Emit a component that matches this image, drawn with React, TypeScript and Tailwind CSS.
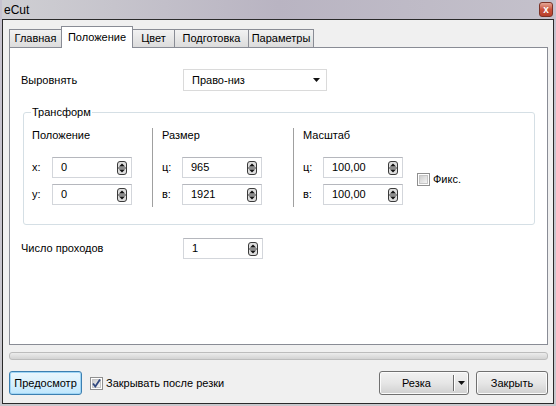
import React from "react";

function SpinIcon() {
  return (
    <svg width="10" height="14" viewBox="0 0 10 14" className="shrink-0">
      <rect x="0.5" y="0.5" width="9" height="13" rx="2.5" fill="#dedede" stroke="#3a3a3a" />
      <line x1="1" y1="7" x2="9" y2="7" stroke="#3a3a3a" />
      <path d="M2 5.6 L8 5.6 L5 2.4 Z" fill="#111" />
      <path d="M2 8.4 L8 8.4 L5 11.6 Z" fill="#111" />
    </svg>
  );
}

function SpinBox({ value }: { value: string }) {
  return (
    <div className="flex h-[21px] w-[80px] items-center justify-between border border-[#d3d6db] border-t-[#b5b7bd] bg-white pl-[8px] pr-[4px]">
      <span>{value}</span>
      <SpinIcon />
    </div>
  );
}

function Field({ label, value }: { label: string; value: string }) {
  return (
    <div className="flex items-center">
      <span className="w-[20px]">{label}</span>
      <SpinBox value={value} />
    </div>
  );
}

function Column({
  title,
  rows,
  className,
}: {
  title: string;
  rows: [string, string][];
  className: string;
}) {
  return (
    <div className={className}>
      <div className="h-[14px] leading-[14px]">{title}</div>
      <div className="mt-[15px] flex flex-col gap-[6px] pb-[2px]">
        {rows.map(([l, v]) => (
          <Field key={l} label={l} value={v} />
        ))}
      </div>
    </div>
  );
}

function CheckBox({ checked }: { checked?: boolean }) {
  return (
    <div className="flex h-[13px] w-[13px] shrink-0 items-center justify-center border border-[#8f8f8f] bg-white">
      <div className="relative h-[9px] w-[9px] border border-[#c6c6c6] bg-gradient-to-br from-[#cfcfcf] to-[#f4f4f4]">
        {checked && (
          <svg width="11" height="11" viewBox="0 0 11 11" className="absolute -left-[2px] -top-[2px]">
            <path d="M2 5.5 L4.3 8.5 L9 1.5" fill="none" stroke="#31487f" strokeWidth="1.8" />
          </svg>
        )}
      </div>
    </div>
  );
}

const tabs = [
  { name: "Главная", w: "w-[53px]" },
  { name: "Положение", w: "w-[72px]", active: true },
  { name: "Цвет", w: "w-[43px]" },
  { name: "Подготовка", w: "w-[75px]" },
  { name: "Параметры", w: "w-[66px]" },
];

export default function App() {
  return (
    <div className="flex h-[406px] w-[556px] flex-col bg-gradient-to-b from-[#c6c2cf] to-[#c9c8cd] px-[2px] pb-[2px] font-['Liberation_Sans',Tahoma,Arial,sans-serif] text-[11px] text-black">
      {/* Title bar */}
      <div className="flex h-[19px] shrink-0 items-center justify-between bg-gradient-to-r from-[#cfcfd3] via-[#b9b4c2] to-[#c4c1cb] pl-[2px] pr-[1px]">
        <span className="text-[12px]">eCut</span>
        <div className="flex h-[15px] w-[14px] items-center justify-center rounded-[3px] border border-[#7c3327] bg-gradient-to-b from-[#e4a696] via-[#c9523c] to-[#b8402c] text-[10px] font-bold leading-none text-white">
          x
        </div>
      </div>

      {/* Client */}
      <div className="flex flex-1 flex-col border border-[#2a2a2a] bg-[#f0f0f0] pl-[6px] pr-[5px]">
        {/* Tabs */}
        <div className="mt-[6px] flex h-[21px] items-end pl-[1px]">
          {tabs.map((t) =>
            t.active ? (
              <div
                key={t.name}
                className={`relative z-10 -mb-px -ml-px flex h-[22px] ${t.w} items-start justify-center border border-b-0 border-[#898c95] bg-white pt-[2px]`}
              >
                {t.name}
              </div>
            ) : (
              <div
                key={t.name}
                className={`-ml-px flex h-[18px] ${t.w} items-center justify-center border border-b-0 border-[#898c95] bg-gradient-to-b from-[#f2f2f2] to-[#dcdcdc]`}
              >
                {t.name}
              </div>
            )
          )}
        </div>

        {/* Panel */}
        <div className="flex h-[298px] flex-col border border-[#898c95] bg-white pl-[11px] pr-[12px] pt-[21px]">
          <div className="flex items-center">
            <span className="w-[162px]">Выровнять</span>
            <div className="flex h-[22px] w-[144px] items-center justify-between border border-[#dadada] bg-white pl-[8px] pr-[6px]">
              <span>Право-низ</span>
              <svg width="7" height="4" viewBox="0 0 7 4">
                <path d="M0 0 L7 0 L3.5 4 Z" fill="#111" />
              </svg>
            </div>
          </div>

          <fieldset className="ml-[2px] mt-[14px] rounded-[3px] border border-[#d5dfe5] px-0 pb-[17px] pt-[9px]">
            <legend className="ml-[7px] px-[1px] leading-[14px]">Трансформ</legend>
            <div className="flex items-stretch">
              <Column
                title="Положение"
                rows={[
                  ["x:", "0"],
                  ["y:", "0"],
                ]}
                className="w-[128px] pl-[8px]"
              />
              <Column
                title="Размер"
                rows={[
                  ["ц:", "965"],
                  ["в:", "1921"],
                ]}
                className="w-[141px] border-l border-[#a0a0a0] pl-[9px]"
              />
              <div className="flex items-center border-l border-[#a0a0a0] pl-[9px]">
                <Column
                  title="Масштаб"
                  rows={[
                    ["ц:", "100,00"],
                    ["в:", "100,00"],
                  ]}
                  className=""
                />
                <div className="ml-[14px] mt-[24px] flex items-center gap-[3px]">
                  <CheckBox />
                  <span>Фикс.</span>
                </div>
              </div>
            </div>
          </fieldset>

          <div className="mt-[13px] flex items-center">
            <span className="w-[162px]">Число проходов</span>
            <SpinBox value="1" />
          </div>
        </div>

        {/* Progress bar */}
        <div className="mt-[7px] h-[8px] rounded-[3px] border border-[#bcbcbc] bg-gradient-to-b from-[#ececec] to-[#d3d3d3]" />

        {/* Bottom buttons */}
        <div className="mt-[11px] flex items-center">
          <div className="flex h-[24px] w-[73px] items-center justify-center rounded-[3px] border border-[#3c7fb1] bg-gradient-to-b from-[#eaf6fd] via-[#d9f0fc] to-[#bee6fd] shadow-[inset_0_0_0_1px_#9fd5f5]">
            Предосмотр
          </div>
          <div className="ml-[8px] flex items-center gap-[3px]">
            <CheckBox checked />
            <span>Закрывать после резки</span>
          </div>
          <div className="ml-auto flex h-[24px] w-[90px] items-center rounded-[3px] border border-[#707070] bg-gradient-to-b from-[#f2f2f2] via-[#e6e6e6] to-[#d0d0d0] shadow-[inset_0_0_0_1px_#fbfbfb]">
            <span className="flex-1 text-center">Резка</span>
            <div className="h-[16px] w-[2px] border-l border-r border-l-[#6a6a6a] border-r-[#ffffff]" />
            <div className="flex w-[13px] justify-center">
              <svg width="7" height="4" viewBox="0 0 7 4">
                <path d="M0 0 L7 0 L3.5 4 Z" fill="#111" />
              </svg>
            </div>
          </div>
          <div className="ml-[7px] flex h-[24px] w-[72px] items-center justify-center rounded-[3px] border border-[#707070] bg-gradient-to-b from-[#f2f2f2] via-[#e6e6e6] to-[#d0d0d0] shadow-[inset_0_0_0_1px_#fbfbfb]">
            Закрыть
          </div>
        </div>
      </div>
    </div>
  );
}
